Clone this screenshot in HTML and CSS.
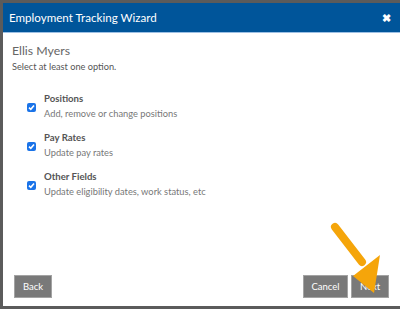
FILE: index.html
```html
<html>
<head>
    <title>Employment Tracking Wizard</title>
    <link rel="stylesheet" href="styles.css">
</head>
<body>
    <div class="dialog">
        <div class="dialog-header">
            <span class="dialog-title">Employment Tracking Wizard</span>
            <span class="close-btn">&#10006;</span>
        </div>

        <div class="dialog-body">
            <div class="employee-name">Ellis Myers</div>
            <div class="hint">Select at least one option.</div>

            <div class="options">
                <div class="option">
                    <span class="check"><svg width="9" height="9" viewBox="0 0 9 9"><path d="M2 4.6 L3.8 6.3 L7 2.6" fill="none" stroke="#fff" stroke-width="1.6"/></svg></span>
                    <div class="option-text">
                        <div class="option-title">Positions</div>
                        <div class="option-desc">Add, remove or change positions</div>
                    </div>
                </div>
                <div class="option">
                    <span class="check"><svg width="9" height="9" viewBox="0 0 9 9"><path d="M2 4.6 L3.8 6.3 L7 2.6" fill="none" stroke="#fff" stroke-width="1.6"/></svg></span>
                    <div class="option-text">
                        <div class="option-title">Pay Rates</div>
                        <div class="option-desc">Update pay rates</div>
                    </div>
                </div>
                <div class="option">
                    <span class="check"><svg width="9" height="9" viewBox="0 0 9 9"><path d="M2 4.6 L3.8 6.3 L7 2.6" fill="none" stroke="#fff" stroke-width="1.6"/></svg></span>
                    <div class="option-text">
                        <div class="option-title">Other Fields</div>
                        <div class="option-desc">Update eligibility dates, work status, etc</div>
                    </div>
                </div>
            </div>
        </div>

        <div class="dialog-footer">
            <button type="button" class="btn">Back</button>
            <div class="footer-right">
                <button type="button" class="btn btn-cancel">Cancel</button>
                <button type="button" class="btn">Next</button>
            </div>
        </div>

        <!-- callout arrow pointing at Next -->
        <svg class="callout-arrow" width="70" height="80" viewBox="0 0 70 80">
            <line x1="10" y1="9" x2="37" y2="44" stroke="#f5a50a" stroke-width="8" stroke-linecap="round"/>
            <polygon points="28,58 55,37 49,75" fill="#f5a50a"/>
        </svg>
    </div>
</body>
</html>
```

FILE: styles.css
```css
body {
    margin: 0;
    background-color: #5b5b5b;
    font-family: Lato, "Open Sans", sans-serif;
    overflow: hidden;
}
.dialog {
    position: relative;
    margin: 3px 0 3px 3px;
    height: 303px;
    background-color: #fff;
    display: flex;
    flex-direction: column;
}
.dialog-header {
    height: 29px;
    background-color: #00559a;
    border-bottom: 1px solid #9dc0e4;
    display: flex;
    align-items: center;
    justify-content: space-between;
    padding: 0 9px 0 6px;
    color: #fff;
}
.dialog-title {
    font-size: 11.6px;
}
.close-btn {
    font-size: 11px;
    font-weight: bold;
}
.dialog-body {
    flex: 1;
    padding: 10px 9px 0 9px;
    color: #666;
}
.employee-name {
    font-size: 12.3px;
    line-height: 16px;
}
.hint {
    font-size: 9.2px;
    line-height: 12px;
    color: #555;
    margin-top: 2px;
}
.option-text {
    color: #555;
}
.options {
    margin-top: 20px;
    padding-left: 16px;
}
.option {
    display: flex;
    align-items: center;
    margin-bottom: 12px;
}
.check {
    width: 9px;
    height: 9px;
    border-radius: 2px;
    background-color: #1a73e8;
    display: flex;
    margin-left: -1px;
    margin-right: 8px;
    margin-top: 2px;
}
.option-title {
    font-size: 9.6px;
    font-weight: bold;
    line-height: 12px;
}
.option-desc {
    font-size: 9.3px;
    color: #777;
    line-height: 12px;
    margin-top: 3px;
}
.dialog-footer {
    display: flex;
    justify-content: space-between;
    padding: 0 11px 8px 11px;
}
.footer-right {
    display: flex;
    gap: 3px;
}
.btn {
    height: 23px;
    padding: 0 6px;
    background-color: #797979;
    border: 1px solid #a3a3a3;
    color: #fff;
    font-family: Lato, sans-serif;
    font-size: 9.5px;
    min-width: 38px;
}
.btn-cancel {
    min-width: 45px;
}
.callout-arrow {
    position: absolute;
    left: 322px;
    top: 215px;
}
```
